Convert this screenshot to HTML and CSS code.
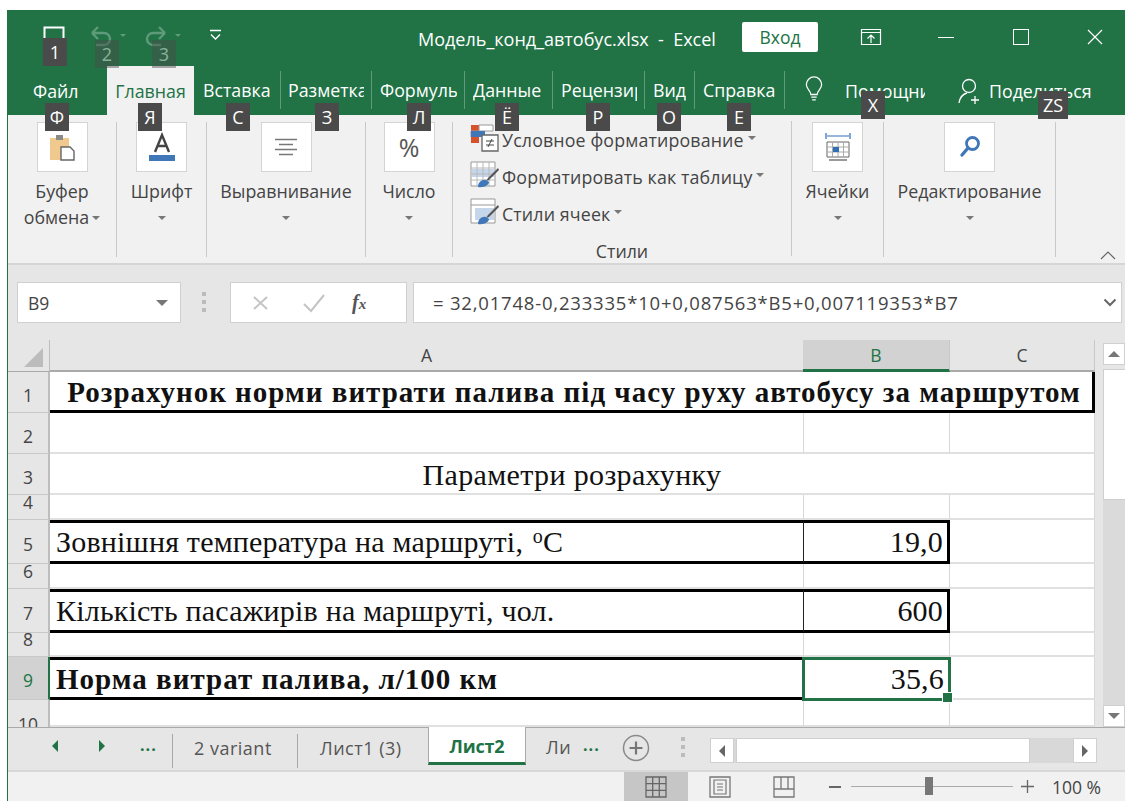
FILE: index.html
```html
<!DOCTYPE html>
<html lang="ru">
<head>
<meta charset="utf-8">
<title>Модель_конд_автобус.xlsx - Excel</title>
<link rel="stylesheet" href="styles.css">
</head>
<body>
<div class="window">
  <header class="titlebar">
    <div class="qat">
      <svg class="qa-save" width="24" height="24" viewBox="0 0 24 24"><path d="M1.500 20V2.500h19V20" fill="none" stroke="#fff" stroke-width="2"/></svg>
      <svg class="qa-undo" width="40" height="24" viewBox="0 0 40 24"><path d="M5 8h12a6 6 0 0 1 0 12h-8M5 8l6-6M5 8l6 6" fill="none" stroke="#5f9a7b" stroke-width="2.400"/><path d="M33 9h6l-3 3z" fill="#5f9a7b"/></svg>
      <svg class="qa-redo" width="40" height="24" viewBox="0 0 40 24"><path d="M23 8H11a6 6 0 0 0 0 12h8M23 8l-6-6M23 8l-6 6" fill="none" stroke="#5f9a7b" stroke-width="2.400"/><path d="M33 9h6l-3 3z" fill="#5f9a7b"/></svg>
      <svg class="qa-more" width="13" height="12" viewBox="0 0 13 12"><path d="M1 1.500h11M2 5.500l4.500 4.500L11 5.500" fill="none" stroke="#fff" stroke-width="1.300"/></svg>
      <div class="doc-title">Модель_конд_автобус.xlsx&nbsp; -&nbsp; Excel</div>
      <button class="signin">Вход</button>
      <svg class="win-display" width="22" height="18" viewBox="0 0 22 18"><path d="M1.500 1.500h19v15h-19zM1.500 4.500h19M11 15V8M7.500 10.500 11 7l3.500 3.500" fill="none" stroke="#fff" stroke-width="1.200"/></svg>
      <span class="win-min"></span>
      <span class="win-max"></span>
      <svg class="win-close" width="16" height="16" viewBox="0 0 16 16"><path d="M1 1l14 14M15 1 1 15" stroke="#fff" stroke-width="1.200"/></svg>
    </div>
    <nav class="tabs">
      <span class="tab-file">Файл</span>
      <span class="tab-home">Главная</span>
      <span class="tab t-ins"><span>Вставка</span></span>
      <span class="tab t-layout"><span>Разметка страницы</span></span>
      <span class="tab t-form"><span>Формулы</span></span>
      <span class="tab t-data"><span>Данные</span></span>
      <span class="tab t-rev"><span>Рецензирование</span></span>
      <span class="tab t-view"><span>Вид</span></span>
      <span class="tab t-help"><span>Справка</span></span>
      <svg class="bulb" width="18" height="28" viewBox="0 0 20 30"><path d="M6.500 20c0-4-5-6-5-11a8.500 8.500 0 0 1 17 0c0 5-5 7-5 11zM7 23h6M8 26h4" fill="none" stroke="#fff" stroke-width="1.400"/></svg>
      <span class="tab-help">Помощник</span>
      <svg class="person" width="24" height="28" viewBox="0 0 24 28"><circle cx="11" cy="9" r="6.500" fill="none" stroke="#fff" stroke-width="1.300"/><path d="M1 26c1-6 4-9 8-10M17 19v8M13 23h8" fill="none" stroke="#fff" stroke-width="1.300"/></svg>
      <span class="tab-share">Поделиться</span>
    </nav>
  </header>

  <section class="ribbon">
    <div class="group g-clip">
      <div class="big-btn">
        <svg width="27" height="27" viewBox="0 0 27 27"><path d="M1 4h19v22H1z" fill="#f0c98e"/><path d="M7 1h7v5H7z" fill="#8a8a8a"/><path d="M12 13h9l4 4v9H12z" fill="#fff" stroke="#666" stroke-width="1.400"/></svg>
      </div>
      <div class="g-label">Буфер</div>
      <div class="g-label">обмена <i class="caret"></i></div>
    </div>
    <div class="group g-font">
      <div class="big-btn">
        <svg width="28" height="30" viewBox="0 0 28 30"><path d="M7 20 14 3l7 17M9.500 14h9" fill="none" stroke="#444" stroke-width="2.400"/><path d="M1 23h26v6H1z" fill="#3f77b8"/></svg>
      </div>
      <div class="g-label">Шрифт</div>
      <div class="g-label"><i class="caret"></i></div>
    </div>
    <div class="group g-align">
      <div class="big-btn">
        <svg width="24" height="18" viewBox="0 0 24 18"><path d="M1 1.500h22M5 6.500h14M1 11.500h22M5 16.500h14" stroke="#777" stroke-width="1.300"/></svg>
      </div>
      <div class="g-label">Выравнивание</div>
      <div class="g-label"><i class="caret"></i></div>
    </div>
    <div class="group g-num">
      <div class="big-btn"><span class="pct">%</span></div>
      <div class="g-label">Число</div>
      <div class="g-label"><i class="caret"></i></div>
    </div>
    <div class="group g-styles">
      <div class="style-row">
        <svg width="29" height="28" viewBox="0 0 29 28"><path d="M1 1h8v6H1z" fill="#d8512d"/><path d="M9 1h14v6H9zM1 7h8v6H1z" fill="#fff" stroke="#999"/><path d="M1 7h14v6H1z" fill="#3f77b8"/><path d="M1 13h8v6H1z" fill="#d8512d"/><path d="M12 11h16v16H12z" fill="#fff" stroke="#666" stroke-width="1.300"/><path d="M16 17h8M16 21h8M22 15l-4 8" stroke="#444"/></svg>
        <span>Условное форматирование</span><i class="caret"></i>
      </div>
      <div class="style-row">
        <svg width="29" height="28" viewBox="0 0 29 28"><path d="M1 1h24v24H1z" fill="#fff" stroke="#999"/><path d="M2 8h22v8H2z" fill="#c6d6ea"/><path d="M1 7h24M1 13h24M1 19h24M7 1v24M13 1v24M19 1v24" stroke="#b8b8b8"/><path d="M28 7 18 17l-2 3 3-1 10-10z" fill="#555"/><path d="M8 26c0-5 4-8 8-7l3 2c0 3-5 6-11 5z" fill="#3f77b8"/></svg>
        <span>Форматировать как таблицу</span><i class="caret"></i>
      </div>
      <div class="style-row">
        <svg width="29" height="28" viewBox="0 0 29 28"><path d="M1 1h24v24H1z" fill="#fff" stroke="#999"/><path d="M1 7h24" stroke="#999"/><path d="M5 10h19v12H5z" fill="#c6d6ea"/><path d="M28 7 18 17l-2 3 3-1 10-10z" fill="#555"/><path d="M8 26c0-5 4-8 8-7l3 2c0 3-5 6-11 5z" fill="#3f77b8"/></svg>
        <span>Стили ячеек</span><i class="caret"></i>
      </div>
      <div class="styles-caption">Стили</div>
    </div>
    <div class="group g-cells">
      <div class="big-btn">
        <svg width="26" height="30" viewBox="0 0 26 30"><path d="M1 1v6M25 1v6M2 4h22" stroke="#2f6fb5" stroke-width="1.200"/><path d="M2 10h22v15H2z" fill="#fff" stroke="#666"/><path d="M2 15h22M2 20h22M7.500 10v15M13 10v15M18.500 10v15" stroke="#aaa"/><path d="M8 15h6v5H8z" fill="#2f6fb5"/><path d="M4 28h18" stroke="#777" stroke-width="1.500"/></svg>
      </div>
      <div class="g-label">Ячейки</div>
      <div class="g-label"><i class="caret"></i></div>
    </div>
    <div class="group g-edit">
      <div class="big-btn">
        <svg width="22" height="24" viewBox="0 0 22 24"><circle cx="13.500" cy="8.500" r="6" fill="none" stroke="#3f77b8" stroke-width="2.800"/><path d="M9 13 3 20" stroke="#3f77b8" stroke-width="3.400" stroke-linecap="round"/></svg>
      </div>
      <div class="g-label">Редактирование</div>
      <div class="g-label"><i class="caret"></i></div>
    </div>
    <svg class="collapse" width="16" height="9" viewBox="0 0 16 9"><path d="M1 8l7-7 7 7" fill="none" stroke="#666" stroke-width="1.200"/></svg>
  </section>

  <section class="formula-bar">
    <div class="name-box"><span>B9</span><i class="caret caret-lg"></i></div>
    <div class="grip"><i></i><i></i><i></i></div>
    <div class="fx-box">
      <svg width="20" height="17" viewBox="0 0 20 17"><path d="M3 3l13 12M16 3 3 15" stroke="#c4c4c4" stroke-width="2"/></svg>
      <svg width="24" height="20" viewBox="0 0 24 20"><path d="M2 11l7 7L22 2" fill="none" stroke="#c4c4c4" stroke-width="2"/></svg>
      <span class="fx">f<small>x</small></span>
    </div>
    <div class="formula"><span>= 32,01748-0,233335*10+0,087563*B5+0,007119353*B7</span>
      <svg width="14" height="9" viewBox="0 0 14 9"><path d="M1.500 1.500 7 7l5.500-5.500" fill="none" stroke="#666" stroke-width="2"/></svg>
    </div>
  </section>

  <section class="sheet-area">
    <div class="sheet">
      <div class="corner"><span class="corner-mark"></span></div>
      <div class="col-h">A</div>
      <div class="col-h col-active">B</div>
      <div class="col-h">C</div>

      <div class="row-h">1</div>
      <div class="cell title-cell span3"><span>Розрахунок норми витрати палива під часу руху автобусу за маршрутом</span></div>

      <div class="row-h">2</div>
      <div class="cell"></div><div class="cell"></div><div class="cell"></div>

      <div class="row-h">3</div>
      <div class="cell center-cell span3"><span>Параметри розрахунку</span></div>

      <div class="row-h">4</div>
      <div class="cell"></div><div class="cell"></div><div class="cell"></div>

      <div class="row-h row-tall">5</div>
      <div class="cell boxed"><span>Зовнішня температура на маршруті, <sup>о</sup>С</span></div>
      <div class="cell boxed value">19,0</div>
      <div class="cell"></div>

      <div class="row-h">6</div>
      <div class="cell"></div><div class="cell"></div><div class="cell"></div>

      <div class="row-h row-tall">7</div>
      <div class="cell boxed"><span>Кількість пасажирів на маршруті, чол.</span></div>
      <div class="cell boxed value">600</div>
      <div class="cell"></div>

      <div class="row-h">8</div>
      <div class="cell"></div><div class="cell"></div><div class="cell"></div>

      <div class="row-h row-tall row-active">9</div>
      <div class="cell boxed strong"><span>Норма витрат палива, л/100 км</span></div>
      <div class="cell boxed value selected">35,6<span class="fill-handle"></span></div>
      <div class="cell"></div>

      <div class="row-h row-clipped">10</div>
      <div class="cell"></div><div class="cell"></div><div class="cell"></div>
    </div>
    <div class="v-scroll">
      <span class="sb-btn sb-up"><i class="tri-up"></i></span>
      <span class="sb-thumb-v"></span>
      <span class="sb-track-v"></span>
      <span class="sb-btn"><i class="tri-down"></i></span>
    </div>
  </section>

  <section class="sheet-tabs">
    <i class="nav-l"></i>
    <i class="nav-r"></i>
    <span class="more">...</span>
    <span class="sheet-tab st-variant">2 variant</span>
    <span class="sheet-tab st-one">Лист1 (3)</span>
    <span class="sheet-tab-on">Лист2</span>
    <span class="st-cut">Ли</span>
    <span class="more more-r">...</span>
    <span class="add-sheet">
      <svg width="28" height="28" viewBox="0 0 28 28"><circle cx="14" cy="14" r="12.500" fill="none" stroke="#8a8a8a" stroke-width="1.500"/><path d="M14 7.500v13M7.500 14h13" stroke="#777" stroke-width="2.200"/></svg>
    </span>
    <div class="grip grip-tabs"><i></i><i></i><i></i></div>
    <div class="h-scroll">
      <span class="hs-btn"><i class="tri-left"></i></span>
      <span class="hs-thumb"></span>
      <span class="hs-track"></span>
      <span class="hs-btn"><i class="tri-right"></i></span>
    </div>
  </section>

  <footer class="status">
    <span class="view view-on">
      <svg width="22" height="22" viewBox="0 0 22 22"><path d="M1 1h20v20H1zM1 7.700h20M1 14.300h20M7.700 1v20M14.300 1v20" fill="none" stroke="#666" stroke-width="1.300"/></svg>
    </span>
    <span class="view view-page">
      <svg width="22" height="22" viewBox="0 0 22 22"><path d="M1 1h20v20H1z" fill="none" stroke="#777" stroke-width="1.300"/><path d="M5 4h12v14H5zM8 8h6M8 11h6M8 14h6" fill="none" stroke="#777" stroke-width="1.200"/></svg>
    </span>
    <span class="view view-break">
      <svg width="22" height="22" viewBox="0 0 22 22"><path d="M1 1h20v20H1zM1 13h20M8 1v12M15 1v12" fill="none" stroke="#777" stroke-width="1.300"/></svg>
    </span>
    <span class="zoom-minus"></span>
    <span class="zoom-track"><span class="zoom-thumb"></span></span>
    <svg class="zoom-plus" width="13" height="13" viewBox="0 0 13 13"><path d="M6.500 0v13M0 6.500h13" stroke="#666" stroke-width="1.300"/></svg>
    <span class="zoom-val">100 %</span>
  </footer>

  <!-- keyboard access hints floating over the title bar and ribbon -->
  <span class="tip k1">1</span>
  <span class="tip k2 dim">2</span>
  <span class="tip k3 dim">3</span>
  <span class="tip kf">Ф</span>
  <span class="tip kh">Я</span>
  <span class="tip ki">С</span>
  <span class="tip kl">З</span>
  <span class="tip km">Л</span>
  <span class="tip kd">Ё</span>
  <span class="tip kr">Р</span>
  <span class="tip kv">О</span>
  <span class="tip ks">Е</span>
  <span class="tip kx">Х</span>
  <span class="tip kz">ZS</span>
</div>
</body>
</html>
```

FILE: styles.css
```css
* { box-sizing: border-box; }
html, body { margin: 0; height: 100%; background: #fff; overflow: hidden; }
body { padding: 10px 0 0 7px; font-family: "Open Sans", "Noto Sans", sans-serif; color: #444; }
i { display: block; font-style: normal; }

.window {
  position: relative;
  width: 1118px;
  height: 791px;
  display: flex;
  flex-direction: column;
  border-left: 1px solid #217346;
  background: #f1f1f1;
}

/* title bar */
.titlebar { height: 105px; background: #217346; color: #fff; flex: none; }
.qat { height: 56px; display: flex; align-items: center; position: relative; }
.qa-save { margin-left: 35px; margin-top: -3px; }
.qa-undo { margin-left: 20px; margin-top: -3px; }
.qa-redo { margin-left: 15px; margin-top: -3px; }
.qa-more { margin-left: 27px; margin-top: -6px; }
.doc-title { margin-left: 196px; font-size: 18px; white-space: nowrap; margin-top: 1px; width: 324px; }
.signin {
  width: 76px; height: 30px; margin-top: -2px;
  border: 0; border-radius: 2px; background: #fff; color: #217346;
  font: 17.500px "Open Sans", sans-serif; padding: 0;
}
.win-display { margin-left: 42px; margin-top: -3px; }
.win-min { width: 16px; height: 1px; background: #fff; margin-left: 56px; margin-top: -2px; }
.win-max { width: 16px; height: 16px; border: 1px solid #fff; margin-left: 59px; margin-top: -3px; }
.win-close { margin-left: 58px; margin-top: -3px; }

.tabs { height: 49px; display: flex; align-items: center; font-size: 17.800px; white-space: nowrap; }
.tab-file { margin-left: 25px; width: 74px; }
.tab-home {
  width: 87px; height: 49px; background: #f1f1f1; color: #217346;
  display: flex; align-items: center; justify-content: center; margin-right: 1px;
}
.tab { height: 38px; padding: 0 7px 0 8px; border-right: 1px solid #5f9a7b; display: flex; align-items: center; overflow: hidden; margin-top: -2px; }
.tab span { display: block; overflow: hidden; }
.t-ins { width: 86px; }
.t-layout { width: 91px; padding-left: 7px; }
.t-form { width: 93px; }
.t-data { width: 88px; }
.t-rev { width: 92px; }
.t-view { width: 50px; }
.t-help { width: 90px; }
.bulb { margin-left: 20px; margin-top: -2px; }
.tab-help { margin-left: 22px; width: 80px; overflow: hidden; }
.person { margin-left: 33px; }
.tab-share { margin-left: 7px; }

/* ribbon */
.ribbon { height: 150px; flex: none; display: flex; position: relative; padding-top: 7px; font-size: 17.800px; border-bottom: 2px solid #d6d6d6; }
.group { height: 135px; border-right: 1px solid #c8c8c8; display: flex; flex-direction: column; align-items: center; flex: none; }
.g-clip { width: 109px; }
.g-font { width: 90px; }
.g-align { width: 159px; }
.g-num { width: 87px; }
.g-styles { width: 339px; align-items: flex-start; padding-left: 17px; position: relative; margin-top: -1px; }
.g-cells { width: 92px; }
.g-edit { width: 172px; }
.big-btn { width: 51px; height: 50px; background: #fff; border: 1px solid #d4d4d4; display: flex; align-items: center; justify-content: center; margin-bottom: 6px; flex: none; }
.g-label { height: 26px; line-height: 26px; white-space: nowrap; display: flex; align-items: center; justify-content: center; gap: 3px; }
.caret { width: 0; height: 0; border-left: 4px solid transparent; border-right: 4px solid transparent; border-top: 4px solid #777; margin-top: 2px; }
.pct { font-size: 25px; color: #555; }
.style-row { height: 37px; display: flex; align-items: center; gap: 3px; white-space: nowrap; letter-spacing: .15px; }
.style-row .caret { margin-left: 1px; margin-top: -3px; }
.style-row svg { flex: none; margin-top: -3px; }
.styles-caption { position: absolute; left: 0; right: 0; top: 118px; text-align: center; line-height: 24px; }
.collapse { position: absolute; left: 1092px; top: 136px; }

/* formula bar */
.formula-bar { height: 75px; flex: none; background: #e6e6e6; display: flex; align-items: flex-start; padding: 17px 3px 0 9px; }
.name-box { width: 164px; height: 41px; background: #fff; border: 1px solid #d0d0d0; display: flex; align-items: center; justify-content: space-between; padding: 0 12px 0 10px; font-size: 17.500px; }
.caret-lg { border-left-width: 6px; border-right-width: 6px; border-top-width: 6px; border-top-color: #777; margin: 0; }
.grip { width: 4px; margin: 10px 24px 0 21px; display: flex; flex-direction: column; gap: 4px; flex: none; }
.grip i { width: 4px; height: 4px; background: #bcbcbc; }
.fx-box { width: 177px; height: 41px; background: #fff; border: 1px solid #d0d0d0; display: flex; align-items: center; padding-left: 20px; }
.fx-box svg:nth-child(2) { margin-left: 31px; }
.fx { margin-left: 26px; font: italic bold 20px "Liberation Serif", serif; color: #555; }
.fx small { font-size: 15px; }
.formula { flex: 1; margin-left: 6px; height: 41px; background: #fff; border: 1px solid #d0d0d0; display: flex; align-items: center; justify-content: space-between; padding: 0 4px 0 19px; font-size: 18.500px; letter-spacing: .8px; white-space: nowrap; }

/* sheet */
.sheet-area { height: 387px; flex: none; background: #e6e6e6; display: flex; overflow: hidden; }
.sheet {
  width: 1087px; height: 387px; flex: none; background: #fff;
  display: grid;
  grid-template-columns: 42px 754px 146px 145px;
  grid-template-rows: 32px 41px 41px 41px 25px 44px 25px 44px 24px 43px 27px;
  font-family: "Liberation Serif", serif; color: #111;
  border-right: 1px solid #bdbdbd;
}
.corner { background: #e6e6e6; border-right: 1px solid #bdbdbd; border-bottom: 1px solid #aaa; position: relative; }
.corner-mark { position: absolute; right: 6px; bottom: 4px; width: 0; height: 0; border-left: 19px solid transparent; border-bottom: 19px solid #bcbcbc; }
.col-h { background: #e6e6e6; border-right: 1px solid #c8c8c8; border-bottom: 2px solid #aaa; font: 17.500px "Open Sans", sans-serif; color: #444; display: flex; align-items: center; justify-content: center; }
.col-active { background: #d2d2d2; color: #217346; border-bottom: 3px solid #217346; margin-left: -1px; }
.row-h { background: #e6e6e6; border-right: 2px solid #bdbdbd; border-bottom: 1px solid #c8c8c8; font: 17.500px/18px "Open Sans", sans-serif; color: #444; display: flex; align-items: flex-end; justify-content: center; padding-bottom: 8px; overflow: hidden; }
.row-tall { padding-bottom: 10px; }
.row-active { background: #d2d2d2; color: #217346; border-right: 2px solid #217346; }
.row-clipped { align-items: flex-start; padding: 15px 0 0; border-bottom: 0; }
.cell { border-right: 1px solid #d8d8d8; border-bottom: 2px solid #e0e0e0; font-size: 30px; letter-spacing: .2px; white-space: nowrap; display: flex; align-items: center; min-width: 0; }
.span3 { grid-column: span 3; }
.title-cell { font-weight: bold; justify-content: center; font-size: 29px; letter-spacing: 1px; border-bottom: 3px solid #000; border-right: 3px solid #000; padding: 2px 2px 0 8px; }
.center-cell { justify-content: center; padding-top: 2px; letter-spacing: .35px; }
.boxed { border-top: 3px solid #000; border-bottom: 3px solid #000; border-right: 1px solid #222; padding-left: 6px; }
.value { justify-content: flex-end; padding: 0 4px 0 0; border-right: 3px solid #000; }
.strong { font-weight: bold; font-size: 29px; letter-spacing: 1px; padding-top: 2px; border-right: 0; }
.selected { position: relative; border: 3px solid #217346; margin: 0 -1px -1px -2px; padding-right: 4px; font-size: 30px; }
.fill-handle { position: absolute; right: -5px; bottom: -5px; width: 9px; height: 9px; background: #217346; border: 1px solid #fff; box-sizing: content-box; }
sup { font-size: 20px; line-height: 0; position: relative; top: -9px; vertical-align: baseline; margin-left: 2px; }

/* vertical scrollbar */
.v-scroll { width: 31px; flex: none; padding: 3px 0 0 8px; display: flex; flex-direction: column; }
.sb-btn { width: 22px; height: 22px; background: #fff; border: 1px solid #d0d0d0; display: flex; align-items: center; justify-content: center; flex: none; }
.sb-up { margin-bottom: 4px; }
.sb-thumb-v { height: 131px; background: #fff; border: 1px solid #cfcfcf; flex: none; }
.sb-track-v { flex: 1; background: #dadada; }
.tri-up { border-left: 6px solid transparent; border-right: 6px solid transparent; border-bottom: 6px solid #777; }
.tri-down { border-left: 6px solid transparent; border-right: 6px solid transparent; border-top: 6px solid #777; }
.tri-left { border-top: 6px solid transparent; border-bottom: 6px solid transparent; border-right: 6px solid #666; }
.tri-right { border-top: 6px solid transparent; border-bottom: 6px solid transparent; border-left: 6px solid #666; }

/* sheet tabs */
.sheet-tabs { height: 45px; flex: none; background: #e6e6e6; display: flex; align-items: flex-start; border-top: 1px solid #aaa; border-bottom: 2px solid #d8d8d8; font-size: 18px; letter-spacing: .5px; white-space: nowrap; color: #555; }
.nav-l { margin: 12px 0 0 44px; border-top: 6px solid transparent; border-bottom: 6px solid transparent; border-right: 6px solid #217346; }
.nav-r { margin: 12px 0 0 41px; border-top: 6px solid transparent; border-bottom: 6px solid transparent; border-left: 6px solid #217346; }
.more { margin: 6px 0 0 35px; color: #217346; font-weight: bold; width: 32px; font-size: 16px; letter-spacing: 1px; }
.sheet-tab { height: 34px; margin-top: 6px; line-height: 28px; border-left: 1px solid #a8a8a8; }
.st-variant { width: 125px; padding-left: 21px; }
.st-one { width: 131px; padding-left: 22px; }
.sheet-tab-on { width: 98px; height: 38px; background: #fff; border-left: 1px solid #aaa; border-right: 1px solid #aaa; border-bottom: 3px solid #217346; color: #217346; font-weight: 700; text-align: center; line-height: 38px; margin-top: -1px; letter-spacing: -.2px; }
.st-cut { margin: 5px 0 0 20px; line-height: 28px; width: 30px; }
.more-r { margin-left: 7px; width: 30px; }
.add-sheet { margin-top: 6px; margin-left: 9px; height: 28px; }
.grip-tabs { margin: 9px 25px 0 31px; }
.h-scroll { width: 387px; height: 25px; margin-top: 10px; background: #d8d8d8; display: flex; }
.hs-btn { width: 24px; height: 25px; background: #fff; border: 1px solid #d0d0d0; display: flex; align-items: center; justify-content: center; flex: none; }
.hs-thumb { width: 294px; background: #fff; border: 1px solid #cfcfcf; margin-left: 2px; }
.hs-track { flex: 1; }

/* status bar */
.status { flex: 1; background: #f1f1f1; display: flex; align-items: center; font-size: 17.500px; }
.view { height: 100%; width: 64px; display: flex; align-items: center; justify-content: center; flex: none; }
.view-on { background: #c6c6c6; margin-left: 616px; }
.zoom-minus { width: 12px; height: 2px; background: #666; margin-left: 13px; }
.zoom-track { position: relative; width: 162px; height: 1px; background: #aaa; margin-left: 10px; }
.zoom-thumb { position: absolute; left: 74px; top: -9px; width: 8px; height: 18px; background: #777; }
.zoom-plus { margin-left: 8px; }
.zoom-val { margin-left: 18px; }

/* keyboard hints */
.tip { position: absolute; width: 24px; height: 28px; background: #4a4a4a; color: #fff; font-size: 18px; line-height: 28px; text-align: center; }
.dim { opacity: .45; }
.k1 { left: 35px; top: 28px; }
.k2 { left: 87px; top: 30px; }
.k3 { left: 144px; top: 30px; }
.kf { left: 37px; top: 93px; }
.kh { left: 130px; top: 93px; }
.ki { left: 218px; top: 93px; }
.kl { left: 307px; top: 93px; }
.km { left: 399px; top: 93px; }
.kd { left: 487px; top: 93px; }
.kr { left: 578px; top: 93px; }
.kv { left: 649px; top: 93px; }
.ks { left: 719px; top: 93px; }
.kx { left: 853px; top: 81px; }
.kz { left: 1030px; top: 81px; width: 30px; }
```
